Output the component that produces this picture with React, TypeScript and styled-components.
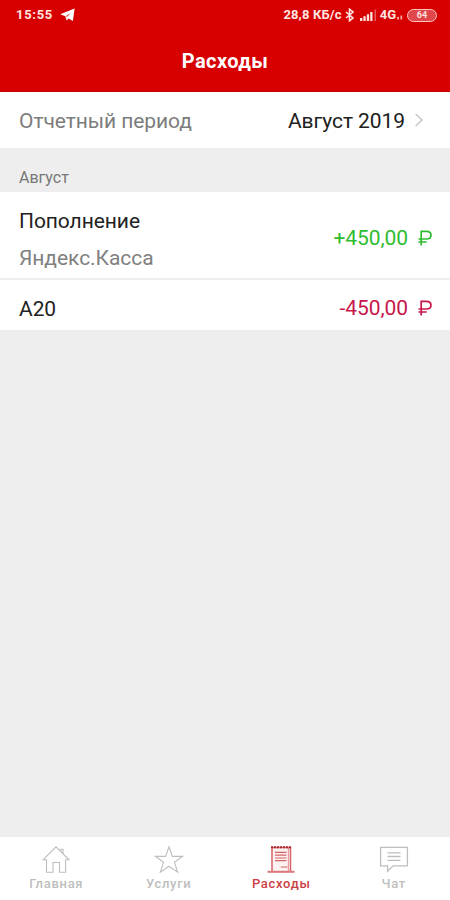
import React from 'react';
import styled, { createGlobalStyle } from 'styled-components';

const Global = createGlobalStyle`
  *, *::before, *::after { box-sizing: border-box; }
  body { margin: 0; background: #eee; font-family: Roboto, "Liberation Sans", sans-serif; }
`;

const Screen = styled.div`
  display: flex;
  flex-direction: column;
  width: 450px;
  height: 900px;
  background: #eeeeee;
  overflow: hidden;
`;

const Header = styled.header`
  display: flex;
  flex-direction: column;
  height: 92px;
  background: #d60000;
  border-bottom: 1px solid #c40000;
  color: #fff;
`;

const StatusBar = styled.div`
  display: flex;
  justify-content: space-between;
  align-items: center;
  height: 30px;
  padding: 0 13px 0 16px;
  color: #ffe4e0;
`;

const StatusGroup = styled.div<{ $gap: number }>`
  display: flex;
  align-items: center;
  gap: ${p => p.$gap}px;
`;

const StatusText = styled.span<{ $size: number; $spacing?: number }>`
  font-size: ${p => p.$size}px;
  font-weight: 700;
  line-height: 16px;
  letter-spacing: ${p => p.$spacing ?? 0}px;
  white-space: nowrap;
`;

const SignalSlot = styled.span`
  display: flex;
  margin-left: 3px;
`;

const DataSlot = styled.span`
  display: flex;
  margin-left: -2px;
`;

const Battery = styled.span`
  display: flex;
  align-items: center;
  justify-content: center;
  width: 30px;
  height: 13px;
  border: 1.5px solid #ffc4c0;
  border-radius: 7px;
  background: #e0474a;
  font-size: 9px;
  font-weight: 700;
  line-height: 10px;
  margin-left: 1px;
`;

const Title = styled.h1`
  margin: 0;
  padding-top: 19px;
  text-align: center;
  font-size: 20px;
  line-height: 24px;
  font-weight: 700;
  letter-spacing: 0.4px;
`;

const Row = styled.div<{ $height: number; $top?: number; $divided?: boolean }>`
  display: flex;
  align-items: center;
  justify-content: space-between;
  height: ${p => p.$height}px;
  padding: ${p => p.$top ?? 0}px 18px 0 19px;
  background: #fff;
  border-bottom: ${p => (p.$divided ? '2px solid #eeeeee' : 'none')};
`;

const PeriodValue = styled.div`
  display: flex;
  align-items: center;
  gap: 10px;
  margin-right: 9px;
`;

const Text = styled.span<{ $color: string; $spacing?: number }>`
  font-size: 21px;
  line-height: 26px;
  color: ${p => p.$color};
  letter-spacing: ${p => p.$spacing ?? -0.07}px;
  white-space: nowrap;
`;

const Section = styled.div`
  display: flex;
  align-items: flex-end;
  height: 44px;
  padding: 0 19px 5px;
  font-size: 16px;
  line-height: 18px;
  letter-spacing: 0;
  color: #777;
`;

const Stack = styled.div`
  display: flex;
  flex-direction: column;
  gap: 11px;
`;

const Amount = styled(Text)`
  display: flex;
  align-items: center;
  gap: 10px;
  margin-bottom: 3px;
`;

const Spacer = styled.div`
  flex: 1;
`;

const NavBar = styled.nav`
  display: grid;
  grid-template-columns: repeat(4, 1fr);
  height: 63px;
  background: #fff;
`;

const NavItem = styled.div<{ $active?: boolean }>`
  display: flex;
  flex-direction: column;
  align-items: center;
  padding-top: 8px;
  color: ${p => (p.$active ? '#cc3f44' : '#bebebe')};
`;

const NavLabel = styled.span<{ $active?: boolean }>`
  margin-top: 2px;
  font-size: 13px;
  line-height: 16px;
  font-weight: 500;
  letter-spacing: 0.7px;
`;

const Telegram = () => (
  <svg width="15" height="14" viewBox="0 0 15 14">
    <path d="M.2 6.2 14.6.5 12.9 13 8.6 10.4 6.6 12.4 5.4 8.2Z" fill="#fff" />
    <path d="M6 8.2 10.4 5 7.2 8.8" fill="#d60000" />
  </svg>
);

const Bluetooth = () => (
  <svg width="9" height="14" viewBox="0 0 9 14" fill="none" stroke="currentColor" strokeWidth="1.6">
    <path d="M1 4 8 10 4.5 12.8V1.2L8 4 1 10" />
  </svg>
);

const Signal = () => (
  <svg width="17" height="12" viewBox="0 0 17 12" fill="currentColor">
    <path d="M0 9h2.3v3H0zM3.4 7.3h2.3V12H3.4zM6.8 5.2h2.3V12H6.8zM10.2 3h2.3v9h-2.3z" />
    <path d="M14.5.5H16V12h-1.5z" opacity=".4" />
  </svg>
);

const Data = () => (
  <svg width="6" height="10" viewBox="0 0 6 10" fill="currentColor" opacity=".7">
    <path d="M0 7h2v2.5H0zM3.4 5.5h1.8v4H3.4z" />
  </svg>
);

const Chevron = () => (
  <svg width="8" height="14" viewBox="0 0 8 14" fill="none" stroke="#c4c4c4" strokeWidth="1.5">
    <path d="M.7 0 7 6 .7 12" />
  </svg>
);

const Ruble = () => (
  <svg width="14" height="16" viewBox="0 0 14 16" fill="none" stroke="currentColor" strokeWidth="1.7">
    <path d="M3.2 15.5V1.4H8.4C11.4 1.4 13 2.8 13 5.2S11.4 9 8.4 9H.5M.5 12H8.7" />
  </svg>
);

const iconProps = {
  width: 30,
  height: 29,
  viewBox: '0 0 30 29',
  fill: 'none',
  stroke: 'currentColor',
  strokeWidth: 1.1,
};

const HomeIcon = () => (
  <svg {...iconProps}>
    <path d="M2 14.8 15 1.8 28 14.8H24.6V27.2H18.5V17.5H12V27.2H5.5V14.8ZM19.7 6.2V4.2H22V8.6" />
  </svg>
);

const StarIcon = () => (
  <svg {...iconProps}>
    <path d="M15 1.8 18.4 11.4H28.4L20.4 17.2 23.6 27.2 15 21.2 6.4 27.2 9.6 17.2 1.6 11.4H11.6Z" />
  </svg>
);

const ReceiptIcon = () => (
  <svg {...iconProps}>
    <path d="M6 26V2.5H24.5V26" fill="#fdf0f0" strokeWidth="1.5" opacity=".8" />
    <path d="M5 2.2H25" strokeWidth="2" strokeDasharray="2 1" stroke="#a82c30" />
    <path d="M22.4 3V26" opacity=".5" />
    <path d="M9 7.4H20.5M9 10.2H20.5M9 13H20.5M9 15.6H20.5M14.8 22H21.5" strokeWidth="1.2" opacity=".8" />
    <path d="M1.5 26.8H28.5" strokeWidth="2" opacity=".7" />
  </svg>
);

const ChatIcon = () => (
  <svg {...iconProps} strokeWidth={1.3}>
    <path d="M1.6 2.3H28.4V20.8H14.2L8.6 26.2V20.8H1.6Z" />
    <path d="M8.5 7.8H21.5M8.5 11.5H21.5M8.5 15.3H21.5" />
  </svg>
);

const tabs = [
  { label: 'Главная', Icon: HomeIcon },
  { label: 'Услуги', Icon: StarIcon },
  { label: 'Расходы', Icon: ReceiptIcon, active: true },
  { label: 'Чат', Icon: ChatIcon },
];

export default function App() {
  return (
    <>
      <Global />
      <Screen>
        <Header>
          <StatusBar>
            <StatusGroup $gap={7}>
              <StatusText $size={13} $spacing={0.7}>15:55</StatusText>
              <Telegram />
            </StatusGroup>
            <StatusGroup $gap={3}>
              <StatusText $size={13} $spacing={0.15}>28,8 КБ/с</StatusText>
              <Bluetooth />
              <SignalSlot><Signal /></SignalSlot>
              <StatusText $size={13}>4G</StatusText>
              <DataSlot><Data /></DataSlot>
              <Battery>64</Battery>
            </StatusGroup>
          </StatusBar>
          <Title>Расходы</Title>
        </Header>
        <Row $height={56} $top={2}>
          <Text $color="#7c7c7c">Отчетный период</Text>
          <PeriodValue>
            <Text $color="#202020">Август 2019</Text>
            <Chevron />
          </PeriodValue>
        </Row>
        <Section>Август</Section>
        <Row $height={88} $top={8} $divided>
          <Stack>
            <Text $color="#222222">Пополнение</Text>
            <Text $color="#808080">Яндекс.Касса</Text>
          </Stack>
          <Amount $color="#2fbd2f">+450,00<Ruble /></Amount>
        </Row>
        <Row $height={50} $top={8}>
          <Text $color="#222222">A20</Text>
          <Amount $color="#c8174b">-450,00<Ruble /></Amount>
        </Row>
        <Spacer />
        <NavBar>
          {tabs.map(({ label, Icon, active }) => (
            <NavItem key={label} $active={active}>
              <Icon />
              <NavLabel $active={active}>{label}</NavLabel>
            </NavItem>
          ))}
        </NavBar>
      </Screen>
    </>
  );
}
